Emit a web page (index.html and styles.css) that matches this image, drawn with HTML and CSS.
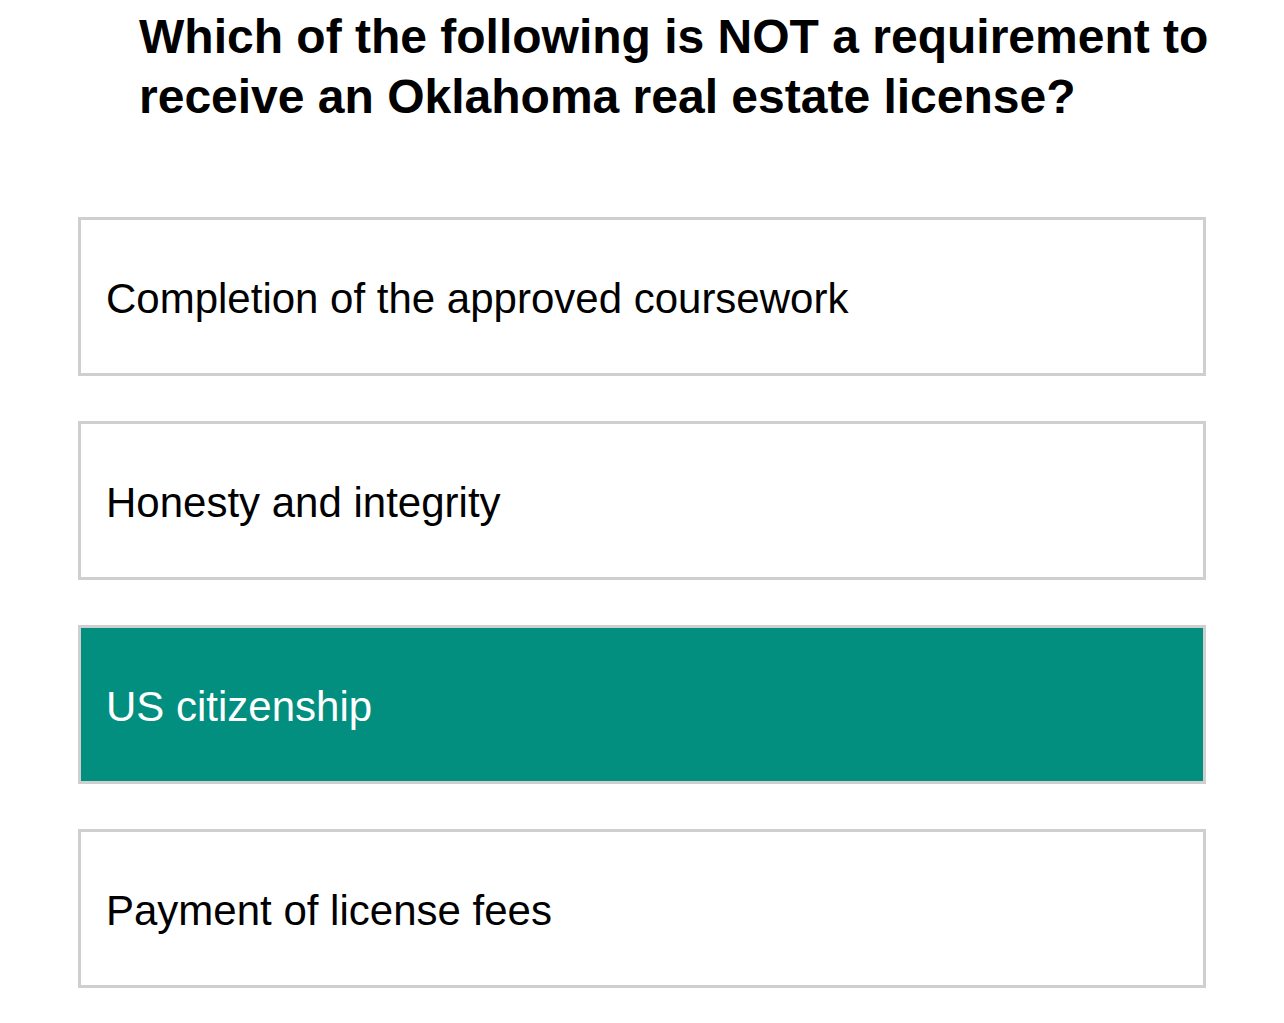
FILE: index.html
```html
<!DOCTYPE html>
<html>
<head>
<meta charset="utf-8">
<link rel="stylesheet" href="styles.css">
</head>
<body>
<main class="quiz">
  <h1 class="question">Which of the following is NOT a requirement to receive an Oklahoma real estate license?</h1>
  <div class="options">
    <div class="option">Completion of the approved coursework</div>
    <div class="option">Honesty and integrity</div>
    <div class="option selected">US citizenship</div>
    <div class="option">Payment of license fees</div>
  </div>
</main>
</body>
</html>
```
FILE: styles.css
```css
html, body {
  margin: 0;
  padding: 0;
  background: #fff;
}
body {
  font-family: "Liberation Sans", Arial, Helvetica, sans-serif;
  color: #000;
}
.quiz {
  padding-top: 7px;
}
.question {
  margin: 0 0 0 139px;
  width: 1100px;
  font-size: 48px;
  line-height: 60px;
  font-weight: bold;
}
.options {
  margin: 90px 0 0 78px;
  width: 1128px;
  display: flex;
  flex-direction: column;
  gap: 45px;
}
.option {
  box-sizing: border-box;
  height: 159px;
  border: 3px solid #cfcfcf;
  padding: 4px 25px 0;
  display: flex;
  align-items: center;
  font-size: 42px;
}
.option.selected {
  background: #038f80;
  color: #fff;
}
```
